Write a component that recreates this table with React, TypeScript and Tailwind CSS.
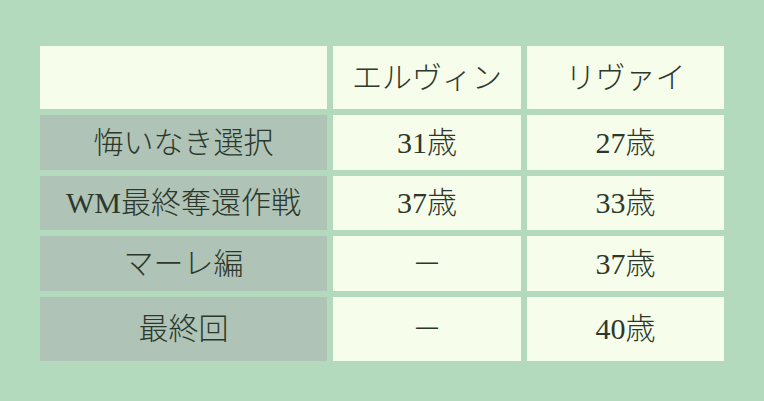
const header = ["", "エルヴィン", "リヴァイ"];

const rows = [
  { label: "悔いなき選択", erwin: "31歳", levi: "27歳", h: "h-[55px]" },
  { label: "WM最終奪還作戦", erwin: "37歳", levi: "33歳", h: "h-[54px]" },
  { label: "マーレ編", erwin: "－", levi: "37歳", h: "h-[55px]" },
  { label: "最終回", erwin: "－", levi: "40歳", h: "h-[64px]" },
];

function App() {
  return (
    <div
      className="w-full h-screen bg-[#b3dabd] pt-[46px] pl-[40px] text-[#2c382c] text-[30px] leading-none"
      style={{ fontFamily: '"Liberation Serif", "Noto Sans CJK JP", serif' }}
    >
      <div className="grid grid-cols-[287px_188px_197px] gap-[6px] w-fit">
        {header.map((h, i) => (
          <div
            key={i}
            className="h-[63px] bg-[#f7fdeb] flex items-center justify-center font-light"
          >
            {h}
          </div>
        ))}
        {rows.map((r) => (
          <div key={r.label} className="contents">
            <div className={`${r.h} bg-[#afc3b7] flex items-center justify-center font-light`}>
              {r.label}
            </div>
            <div className={`${r.h} bg-[#f7fdeb] flex items-center justify-center font-light`}>
              {r.erwin}
            </div>
            <div className={`${r.h} bg-[#f7fdeb] flex items-center justify-center font-light`}>
              {r.levi}
            </div>
          </div>
        ))}
      </div>
    </div>
  );
}

export default App;
